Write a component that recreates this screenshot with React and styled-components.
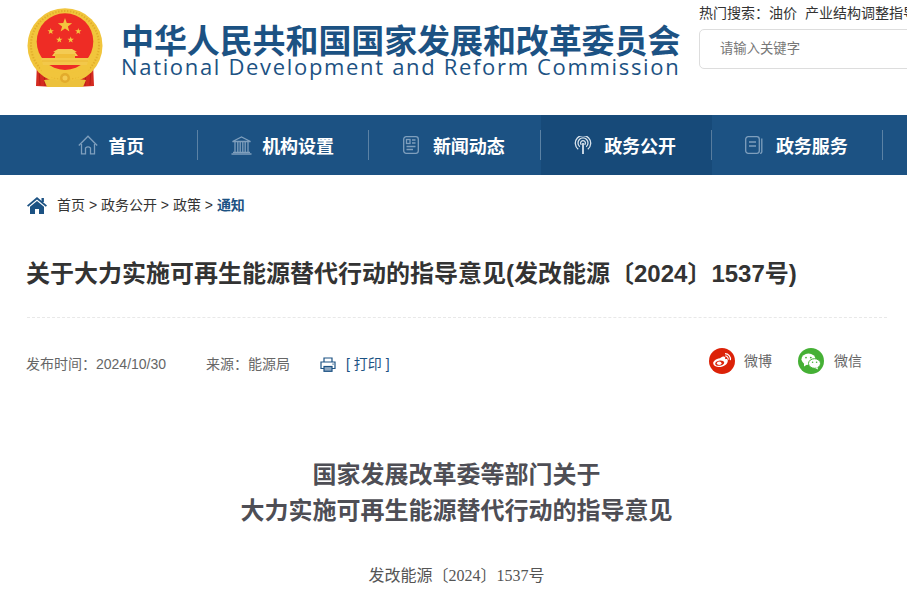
import React from "react";
import styled, { createGlobalStyle } from "styled-components";

const CJK = `"Noto Sans CJK SC", "Liberation Sans", sans-serif`;
const LATIN = `"Liberation Sans", "Noto Sans CJK SC", sans-serif`;
const BLUE = "#1c5283";

const Global = createGlobalStyle`
  html, body { margin: 0; padding: 0; background: #fff; overflow: hidden; }
  body { font-family: ${LATIN}; width: 907px; height: 597px; }
  * { box-sizing: border-box; }
`;

const Page = styled.div`width: 907px; height: 597px; overflow: hidden;`;

const Header = styled.header`
  height: 115px;
  display: flex;
  padding-left: 27px;
  overflow: hidden;
`;
const Brand = styled.div`
  width: 672px;
  flex: none;
  display: flex;
  gap: 18px;
  padding-top: 8px;
`;
const BrandText = styled.div`display: flex; flex-direction: column; padding-top: 9px;`;
const TitleCn = styled.div`
  font: 700 33px/44px ${CJK};
  letter-spacing: -0.1px;
  color: ${BLUE};
  white-space: nowrap;
`;
const TitleEn = styled.div`
  font: 400 22px/26px "Open Sans", sans-serif;
  letter-spacing: 1.67px;
  color: ${BLUE};
  white-space: nowrap;
  margin-top: -8px;
`;
const SearchCol = styled.div`flex: none; width: 300px; padding-top: 4px;`;
const Hot = styled.div`
  font: 14px/16px ${CJK};
  color: #333;
  white-space: nowrap;
  display: flex;
  gap: 8px;
`;
const SearchBox = styled.div`
  margin-top: 9px;
  height: 40px;
  border: 1px solid #ddd;
  border-radius: 5px;
  padding-left: 20px;
  font: 13.33px/36px ${CJK};
  color: #777;
`;

const Nav = styled.nav`
  height: 60px;
  background: ${BLUE};
  display: flex;
  padding-left: 26.75px;
`;
const NavItem = styled.div`
  position: relative;
  width: 171.25px;
  flex: none;
  display: flex;
  align-items: center;
  justify-content: center;
  gap: ${(p) => p.$gap}px;
  padding-right: 2px;
  background: ${(p) => (p.$active ? "#174a79" : "transparent")};
  color: #fff;
  font: 700 18px/60px ${CJK};
  &::after {
    content: "";
    position: absolute;
    right: 0;
    top: 15px;
    height: 30px;
    width: 1px;
    background: rgba(255, 255, 255, 0.28);
  }
  svg { flex: none; }
`;

const Crumbs = styled.div`
  height: 60px;
  padding-left: 27px;
  display: flex;
  align-items: center;
  gap: 10px;
  font: 14px/16px ${LATIN};
  color: #333;
`;
const CrumbNow = styled.span`color: ${BLUE}; font-weight: 700;`;

const Main = styled.main`padding: 0 20px 0 27px;`;
const ArticleTitle = styled.h1`
  margin: 20px 0 0;
  font: 700 24px/38px ${LATIN};
  color: #333;
  white-space: nowrap;
  text-indent: -1px;
  height: 63px;
  border-bottom: 1px dashed #e8e8e8;
`;
const Meta = styled.div`
  height: 92px;
  margin-left: -1px;
  display: flex;
  align-items: center;
  font: 14px/18px ${LATIN};
  color: #666;
  padding-right: 25px;
`;
const MetaDate = styled.span`margin-right: 40px;`;
const MetaSource = styled.span`margin-right: 30px;`;
const Print = styled.span`
  display: flex;
  align-items: center;
  gap: 10px;
  color: ${BLUE};
`;
const Share = styled.div`
  margin-left: auto;
  display: flex;
  gap: 26px;
  margin-top: -6px;
`;
const ShareItem = styled.span`display: flex; align-items: center; gap: ${(p) => p.$gap}px;`;
const Dot = styled.span`
  width: 26px;
  height: 26px;
  border-radius: 50%;
  background: ${(p) => p.$c};
  display: flex;
  align-items: center;
  justify-content: center;
`;

const Article = styled.article`
  width: 859px;
  text-align: center;
  padding-top: 45px;
`;
const Heading = styled.h2`
  margin: 0;
  font: 700 24px/36px ${CJK};
  color: #4e4e55;
`;
const DocNo = styled.p`
  margin: 37px 0 0;
  font: 16px/24px "Liberation Serif", "Noto Sans CJK SC", serif;
  color: #555;
`;

const star = (cx, cy, r) => {
  const pts = [];
  for (let i = 0; i < 10; i++) {
    const a = -Math.PI / 2 + (i * Math.PI) / 5;
    const rr = i % 2 ? r * 0.4 : r;
    pts.push(`${(cx + rr * Math.cos(a)).toFixed(2)},${(cy + rr * Math.sin(a)).toFixed(2)}`);
  }
  return pts.join(" ");
};

const Emblem = () => (
  <svg width="76" height="80" viewBox="0 0 76 80">
    <path d="M10 55 L9 78 L28 79 L30 70Z M66 55 L67 78 L48 79 L46 70Z" fill="#d42a20" />
    <path d="M12 60 L13 77 M17 62 L18 78 M59 62 L58 78 M64 60 L63 77" stroke="#b81d17" strokeWidth="1" />
    <circle cx="38" cy="37.7" r="37.5" fill="#f1c53c" />
    <circle cx="38" cy="37" r="34" fill="none" stroke="#e2ad2a" strokeWidth="2" strokeDasharray="1.4 1.6" />
    <circle cx="38" cy="33.6" r="28.3" fill="#ee2c25" />
    <path d="M14 50 H62 L60 57 H16Z" fill="#f3c84a" />
    <path d="M15 53 H61" stroke="#e8b32f" strokeWidth="0.8" />
    <path d="M25 48 L28 44 L26 44 L31 41 H45 L50 44 L48 44 L51 48Z" fill="#f4cb52" />
    <rect x="28" y="46" width="20" height="4" fill="#f0bd37" />
    <path d="M12 57 Q38 74 64 57 L60 66 Q38 76 16 66Z" fill="#f1c53c" />
    <path d="M20 79 L17 72 L26 71 L31 73 Q38 62 45 73 L50 71 L59 72 L56 79Z" fill="#ecc13c" />
    <circle cx="38" cy="70" r="5" fill="#e2ab2c" />
    <circle cx="38" cy="70" r="2.5" fill="#f4cb52" />
    <polygon points={star(38, 17.5, 7.5)} fill="#f3c63e" />
    <polygon points={star(23.7, 23.3, 3.4)} fill="#f3c63e" />
    <polygon points={star(51.3, 23.3, 3.4)} fill="#f3c63e" />
    <polygon points={star(32.3, 31.8, 3.4)} fill="#f3c63e" />
    <polygon points={star(43.7, 31.8, 3.4)} fill="#f3c63e" />
  </svg>
);

const line = { fill: "none", stroke: "#7f9fbd", strokeWidth: 1.3 };

const HomeOutline = () => (
  <svg width="20" height="20" viewBox="0 0 20 20" {...line}>
    <path d="M0.8 10.5 L10 1.2 L19.2 10.5" />
    <path d="M3.5 9 V18.8 H7.5 V13 Q10 10.8 12.5 13 V18.8 H16.5 V9" />
  </svg>
);
const Bank = () => (
  <svg width="21" height="19" viewBox="0 0 21 19" {...line}>
    <path d="M1.5 5.5 L10.5 1 L19.5 5.5Z" />
    <path d="M4 6 V16 M6.8 6 V16 M9.2 6 V16 M11.8 6 V16 M14.2 6 V16 M17 6 V16" />
    <path d="M0.5 18 H20.5 M2 16.3 H19" />
  </svg>
);
const News = () => (
  <svg width="16" height="18" viewBox="0 0 16 18" {...line}>
    <rect x="0.7" y="0.7" width="14.6" height="16.6" rx="2.5" />
    <rect x="3.5" y="3.5" width="3.5" height="4" />
    <path d="M9 4 H12.5 M9 7 H12.5 M3.5 10.5 H12.5 M3.5 13.5 H10" />
  </svg>
);
const Signal = () => (
  <svg width="18" height="18" viewBox="0 0 18 18" fill="none" stroke="#d9e3ec" strokeWidth="1.3">
    <path d="M4.2 13.2 A7.7 7.7 0 1 1 13.8 13.2" />
    <path d="M5.8 10.8 A5 5 0 1 1 12.2 10.8" />
    <path d="M7.4 8.8 A2.4 2.4 0 1 1 10.6 8.8" />
    <path d="M9 7 V18" strokeWidth="1.8" />
  </svg>
);
const Book = () => (
  <svg width="18" height="18" viewBox="0 0 18 18" {...line}>
    <rect x="0.7" y="0.7" width="13.6" height="16.6" rx="2.5" />
    <path d="M4 6 H11 M4 10 H11" />
    <path d="M16.8 2.5 V16 Q16.8 17.3 15 17.3" />
  </svg>
);
const HomeSolid = () => (
  <svg width="20" height="17" viewBox="0 0 20 17" fill={BLUE}>
    <path d="M10 0 L20 8.6 L18.8 9.8 L10 2.5 L1.2 9.8 L0 8.6Z" />
    <path d="M10 4 L17 9.8 V17 H12 V12 H8 V17 H3 V9.8Z" />
    <rect x="14.5" y="1" width="2.4" height="4" />
  </svg>
);
const Printer = () => (
  <svg width="16" height="15" viewBox="0 0 16 15" fill="none" stroke={BLUE} strokeWidth="1.2">
    <path d="M4 5 V1 H12 V5" />
    <path d="M4 11.5 H1 V5 H15 V11.5 H12" />
    <rect x="4" y="9.5" width="8" height="4.8" fill="#8fa9c2" />
    <path d="M12.5 7.2 H13.6" />
  </svg>
);
const Weibo = () => (
  <svg width="20" height="18" viewBox="0 0 20 18" fill="#fff">
    <path fillRule="evenodd" d="M8 6.2 C10 4.3 12.3 3.9 13 5 C13.4 5.7 13.2 6.6 13 7.3 C14.6 6.7 16 7.3 15.8 9 C15.5 12.6 11.3 15 7.6 15 C4.1 15 1.2 13.6 1.2 11 C1.2 9.3 3.7 6.6 8 6.2Z M7.8 8.6 C5 8.8 3 10.3 3.2 12 C3.4 13.4 5.6 14.1 8 13.8 C10.6 13.5 12.4 12.1 12.2 10.6 C12 9.2 10.2 8.4 7.8 8.6Z" />
    <ellipse cx="7.2" cy="11.2" rx="2.3" ry="1.8" />
    <path d="M13 1.6 A5.6 5.6 0 0 1 18.4 8.2" fill="none" stroke="#fff" strokeWidth="1.2" />
    <path d="M13.3 3.9 A3.2 3.2 0 0 1 16.2 7.6" fill="none" stroke="#fff" strokeWidth="1.1" />
  </svg>
);
const Wechat = () => (
  <svg width="20" height="17" viewBox="0 0 20 17" fill="#fff">
    <ellipse cx="7.5" cy="6.2" rx="7" ry="5.7" />
    <path d="M3 10 L3 13.5 L6.5 11.2Z" />
    <ellipse cx="13.5" cy="10.5" rx="6" ry="4.8" stroke="#45b035" strokeWidth="1" />
    <path d="M16.5 14 L17 16.5 L14 15Z" />
    <circle cx="5" cy="4.6" r="0.9" fill="#45b035" />
    <circle cx="9.8" cy="4.6" r="0.9" fill="#45b035" />
    <circle cx="11.6" cy="9.3" r="0.8" fill="#45b035" />
    <circle cx="15.6" cy="9.3" r="0.8" fill="#45b035" />
  </svg>
);

export default function App() {
  return (
    <Page>
      <Global />
      <Header>
        <Brand>
          <Emblem />
          <BrandText>
            <TitleCn>中华人民共和国国家发展和改革委员会</TitleCn>
            <TitleEn>National Development and Reform Commission</TitleEn>
          </BrandText>
        </Brand>
        <SearchCol>
          <Hot>
            <span>热门搜索：油价</span>
            <span>产业结构调整指导目录</span>
          </Hot>
          <SearchBox>请输入关键字</SearchBox>
        </SearchCol>
      </Header>
      <Nav>
        <NavItem $gap={10}><HomeOutline />首页</NavItem>
        <NavItem $gap={10}><Bank />机构设置</NavItem>
        <NavItem $gap={14}><News />新闻动态</NavItem>
        <NavItem $active $gap={12}><Signal />政务公开</NavItem>
        <NavItem $gap={13}><Book />政务服务</NavItem>
      </Nav>
      <Crumbs>
        <HomeSolid />
        <span>首页 &gt; 政务公开 &gt; 政策 &gt; <CrumbNow>通知</CrumbNow></span>
      </Crumbs>
      <Main>
        <ArticleTitle>关于大力实施可再生能源替代行动的指导意见(发改能源〔2024〕1537号)</ArticleTitle>
        <Meta>
          <MetaDate>发布时间：2024/10/30</MetaDate>
          <MetaSource>来源：能源局</MetaSource>
          <Print><Printer />[ 打印 ]</Print>
          <Share>
            <ShareItem $gap={9}><Dot $c="#dc2208"><Weibo /></Dot>微博</ShareItem>
            <ShareItem $gap={10}><Dot $c="#45b035"><Wechat /></Dot>微信</ShareItem>
          </Share>
        </Meta>
        <Article>
          <Heading>国家发展改革委等部门关于<br />大力实施可再生能源替代行动的指导意见</Heading>
          <DocNo>发改能源〔2024〕1537号</DocNo>
        </Article>
      </Main>
    </Page>
  );
}
